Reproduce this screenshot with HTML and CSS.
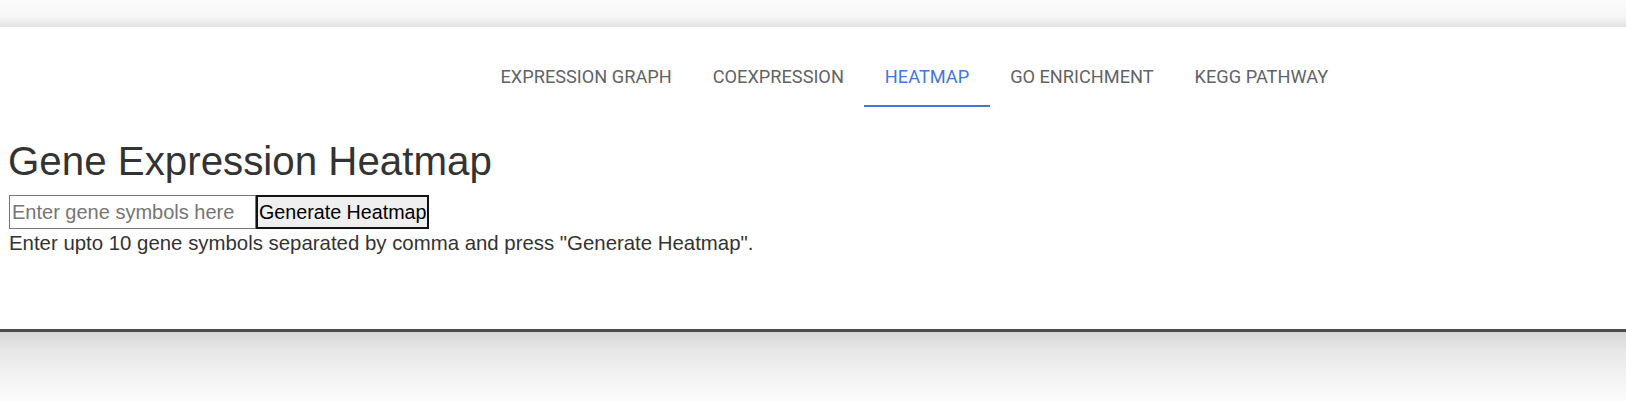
FILE: index.html
```html
<!DOCTYPE html>
<html>
<head>
<meta charset="utf-8">
<link rel="stylesheet" href="styles.css">
</head>
<body>
<div class="top-shade"></div>
<div class="panel">
  <nav class="tabs">
    <div class="tab">EXPRESSION GRAPH</div>
    <div class="tab">COEXPRESSION</div>
    <div class="tab active">HEATMAP</div>
    <div class="tab">GO ENRICHMENT</div>
    <div class="tab">KEGG PATHWAY</div>
  </nav>
  <main class="content">
    <h1 class="title">Gene Expression Heatmap</h1>
    <div class="form">
      <input class="gene-input" type="text" placeholder="Enter gene symbols here">
      <button class="gen-btn">Generate Heatmap</button>
    </div>
    <p class="help">Enter upto 10 gene symbols separated by comma and press "Generate Heatmap".</p>
  </main>
</div>
<div class="bottom-shade"></div>
</body>
</html>
```
FILE: styles.css
```css
html, body {
  margin: 0;
  padding: 0;
  background: #fafafa;
}
body {
  width: 1626px;
  height: 401px;
  overflow: hidden;
  font-family: "Liberation Sans", Arial, sans-serif;
}
.top-shade {
  height: 27px;
  background: linear-gradient(to bottom, #fbfbfb 0%, #f7f7f7 60%, #e3e3e3 100%);
}
.panel {
  background: #ffffff;
  height: 302px;
  border-bottom: 3px solid #4d4d4d;
  box-sizing: content-box;
}
.tabs {
  display: flex;
  padding-left: 480px;
  padding-top: 19px;
}
.tab {
  font-family: Roboto, "Noto Sans", sans-serif;
  font-size: 18.2px;
  color: #5f6368;
  padding: 2px 20.5px 0;
  height: 61px;
  line-height: 57px;
  box-sizing: border-box;
  border-bottom: 2px solid transparent;
  white-space: nowrap;
}
.tab.active {
  color: #3f78d6;
  border-bottom-color: #3f78d6;
}
.content {
  padding-left: 9px;
}
.title {
  margin: 32px 0 0 -1px;
  font-size: 40.3px;
  font-weight: normal;
  color: #333333;
  line-height: 46px;
}
.form {
  display: flex;
  margin-top: 10px;
}
.gene-input {
  width: 247px;
  height: 34px;
  box-sizing: border-box;
  border: 1px solid #767676;
  font-family: "Liberation Sans", Arial, sans-serif;
  font-size: 20px;
  padding: 0 2px;
  margin: 0;
  color: #333;
}
.gene-input::placeholder {
  color: #757575;
}
.gen-btn {
  height: 34px;
  box-sizing: border-box;
  border: 2px solid #111;
  background: #efefef;
  font-family: "Liberation Sans", Arial, sans-serif;
  font-size: 19.7px;
  color: #000;
  padding: 0 1px;
  margin: 0;
  white-space: nowrap;
}
.help {
  margin: 3px 0 0 0;
  font-size: 20.4px;
  line-height: 23px;
  color: #333333;
}
.bottom-shade {
  height: 69px;
  background: linear-gradient(to bottom, #d6d6d6 0%, #e6e6e6 25%, #f4f4f4 70%, #fbfbfb 100%);
}
```
